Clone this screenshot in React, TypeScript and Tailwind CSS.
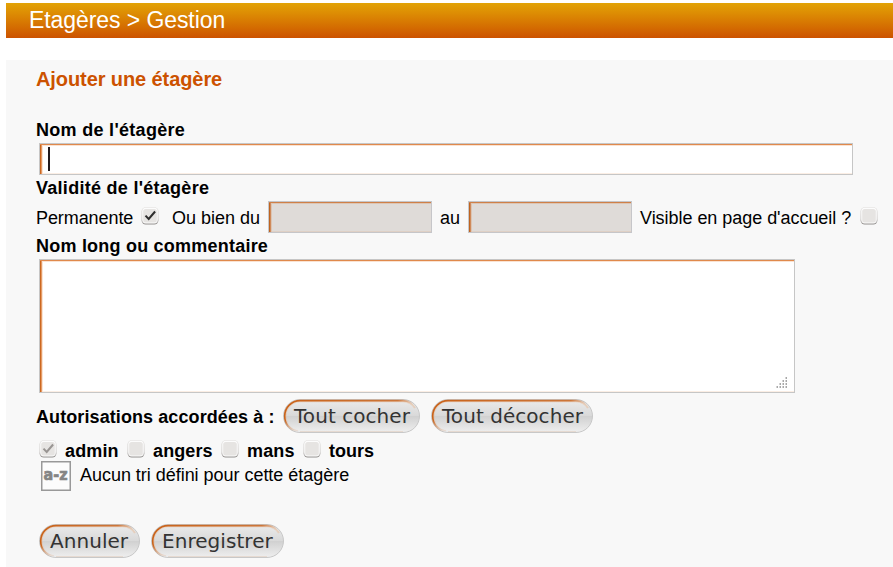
import React from "react";

const FIELD =
  "border border-[#c6c6c6] shadow-[inset_0_1px_0_#e0894c,inset_1px_0_0_#cc6820,inset_2px_0_0_#e39a66,inset_3px_2px_0_#fae3d2,inset_0_-1px_0_#fbeee4]";
const DISABLED_FIELD =
  "h-8 w-[164px] shrink-0 border border-[#c6c6c9] bg-[#dfdbd8] shadow-[inset_0_1px_0_#cf8048,inset_1px_0_0_#bf6420,inset_2px_0_0_#d08a5a,inset_3px_2px_0_#dcc5b4,inset_0_-1px_0_#dfd0c5]";

function Check({ checked = false, muted = false }: { checked?: boolean; muted?: boolean }) {
  const id = React.useId();
  return (
    <svg className="block h-[18px] w-[18px] shrink-0" viewBox="0 0 18 18" fill="none">
      <defs>
        <linearGradient id={id} x1="0" y1="0" x2="0" y2="1">
          <stop offset="0" stopColor="#e2e0de" />
          <stop offset="0.65" stopColor="#c9c6c4" />
          <stop offset="1" stopColor="#918e8c" />
        </linearGradient>
      </defs>
      <rect x="0.5" y="0.3" width="17" height="17.2" rx="4.2" fill={`url(#${id})`} />
      <rect x="1.2" y="0.8" width="15.6" height="15.6" rx="3.6" fill="#fcfcfc" />
      <rect x="2.2" y="2" width="13.6" height="13.4" rx="2.5" fill="#e6e4e2" />
      {checked && (
        <path d="M4.5 8.6L7.7 12L14.1 4.5" stroke={muted ? "#999593" : "#2e2e2e"} strokeWidth="2" />
      )}
    </svg>
  );
}

function Pill({ label, width, text, id }: { label: string; width: number; text: number; id: string }) {
  return (
    <button className="relative block h-[34px] shrink-0" style={{ width }}>
      <svg className="absolute inset-0" width={width} height="34" fill="none">
        <defs>
          <linearGradient id={id + "f"} x1="0" y1="0" x2="0" y2="1">
            <stop offset="0" stopColor="#ebebeb" />
            <stop offset="0.49" stopColor="#d9d9d9" />
            <stop offset="0.5" stopColor="#d0d0d0" />
            <stop offset="1" stopColor="#efefef" />
          </linearGradient>
          <linearGradient id={id + "o"} gradientUnits="userSpaceOnUse" x1="0" y1="0" x2={width} y2="0">
            <stop offset="0" stopColor="#c96219" />
            <stop offset={(width - 22) / width} stopColor="#cc763a" />
            <stop offset={(width - 7) / width} stopColor="#cc763a" stopOpacity="0" />
          </linearGradient>
          <linearGradient id={id + "m"} gradientUnits="userSpaceOnUse" x1="0" y1="21" x2="0" y2="33">
            <stop offset="0" stopColor="#fff" />
            <stop offset="1" stopColor="#fff" stopOpacity="0" />
          </linearGradient>
          <mask id={id + "k"} maskUnits="userSpaceOnUse" x="0" y="0" width={width} height="34">
            <rect width={width} height="34" fill={"url(#" + id + "m)"} />
          </mask>
        </defs>
        <rect x="0.5" y="0.5" width={width - 1} height="33" rx="16.5" fill={"url(#" + id + "f)"} stroke="#c8c8c8" />
        <g mask={"url(#" + id + "k)"}>
          <path
            d={`M15 32C7 31 2.5 24.5 2.5 17A14.8 14.8 0 0 1 17.2 2.2H${width - 17}Q${width - 9} 2.4 ${width - 5} 9`}
            stroke="#e9b68f"
            strokeWidth="2"
            opacity="0.45"
          />
          <path
            d={`M15 32C6 31 1.7 24.5 1.7 17A15.4 15.4 0 0 1 17 1.6H${width - 17}Q${width - 9} 1.8 ${width - 4} 8`}
            stroke={"url(#" + id + "o)"}
            strokeWidth="1.6"
          />
        </g>
        <path d={`M17 32.5H${width - 17}`} stroke="#e6dad1" />
      </svg>
      <span
        className="relative ml-[11px] block text-left font-['DejaVu_Sans',sans-serif] text-[20px] leading-[34px] tracking-[0.05px] whitespace-nowrap text-[#333]"
        style={{ width: text }}
      >
        {label}
      </span>
    </button>
  );
}

export default function App() {
  return (
    <div className="h-[567px] w-[893px] overflow-hidden bg-white pt-[3px] pl-1.5 font-['Liberation_Sans',Arial,sans-serif] text-[18px] leading-6 whitespace-nowrap text-black">
      <header className="h-[35px] bg-linear-to-b from-[#e2a306] to-[#cc5200] pl-[23px] text-[23px] leading-[35px] tracking-[-0.08px] text-white">
        Etagères &gt; Gestion
      </header>
      <main className="mt-[22px] h-[507px] bg-[#f8f8f8] pl-[30px]">
        <h1 className="h-[58px] text-[20px] leading-[38px] font-bold tracking-[-0.09px] text-[#cc5200]">Ajouter une étagère</h1>
        <div className="h-[25px] font-bold tracking-[0.3px]">Nom de l'étagère</div>
        <div className={`ml-[3px] flex h-8 w-[814px] items-center bg-white pl-2 ${FIELD}`}>
          <span className="h-6 w-0.5 bg-[#201a1e]" />
        </div>
        <div className="h-[26px] pt-px font-bold tracking-[0.28px]">Validité de l'étagère</div>
        <div className="flex h-8 items-center">
          <span className="w-[105px] pt-0.5 tracking-[-0.08px]">Permanente</span>
          <div className="pb-0.5">
            <Check checked />
          </div>
          <span className="ml-[13px] w-24 pt-0.5">Ou bien du</span>
          <div className={DISABLED_FIELD} />
          <span className="w-9 pt-0.5 pl-2">au</span>
          <div className={DISABLED_FIELD} />
          <span className="w-[228px] pt-0.5 pl-2 tracking-[-0.04px]">Visible en page d'accueil ?</span>
          <div className="pb-0.5">
            <Check />
          </div>
        </div>
        <div className="h-[26px] pt-px font-bold tracking-[0.22px]">Nom long ou commentaire</div>
        <div className={`ml-[3px] flex h-[134px] w-[756px] items-end justify-end bg-white pr-[7px] pb-[3px] ${FIELD}`}>
          <svg width="12" height="12" shapeRendering="crispEdges">
            {[[10, 0], [7, 3], [10, 3], [4, 6], [7, 6], [10, 6], [1, 9], [4, 9], [7, 9], [10, 9]].map(([x, y]) => (
              <g key={`${x}-${y}`}>
                <rect x={x} y={y} width="1" height="2" fill="#d4d4d4" />
                <rect x={x + 1} y={y} width="1" height="2" fill="#a8a8a8" />
              </g>
            ))}
          </svg>
        </div>
        <div className="mt-1.5 flex h-[34px] items-center">
          <span className="w-[247px] pt-0.5 font-bold tracking-[0.09px]">Autorisations accordées à :</span>
          <Pill label="Tout cocher" width={137} text={115} id="all" />
          <span className="w-[11px]" />
          <Pill label="Tout décocher" width={162} text={140} id="none" />
        </div>
        <div className="mt-[7px] flex h-[21px] items-start pl-[3px] leading-[23px] font-bold">
          <Check checked muted />
          <span className="w-[70px] pl-2 tracking-[0.15px]">admin</span>
          <Check />
          <span className="w-[76px] pl-2 tracking-[0.12px]">angers</span>
          <Check />
          <span className="w-16 pl-2 tracking-[0.15px]">mans</span>
          <Check />
          <span className="pl-2">tours</span>
        </div>
        <div className="flex h-[30px] pl-[5px]">
          <svg width="30" height="30" className="shrink-0">
            <rect x="0.75" y="0.75" width="28.5" height="28.5" fill="#fcfcfc" stroke="#999" strokeWidth="1.5" />
            <text x="2.5" y="19" fill="#858585" stroke="#858585" strokeWidth="0.7" fontFamily="DejaVu Sans" fontWeight="bold" fontSize="15" textLength="24" lengthAdjust="spacingAndGlyphs">
              a-z
            </text>
          </svg>
          <span className="pt-0.5 pl-[9px] tracking-[-0.03px]">Aucun tri défini pour cette étagère</span>
        </div>
        <div className="mt-[33px] flex gap-[11px] pl-[3px]">
          <Pill label="Annuler" width={101} text={79} id="cancel" />
          <Pill label="Enregistrer" width={133} text={111} id="save" />
        </div>
      </main>
    </div>
  );
}
